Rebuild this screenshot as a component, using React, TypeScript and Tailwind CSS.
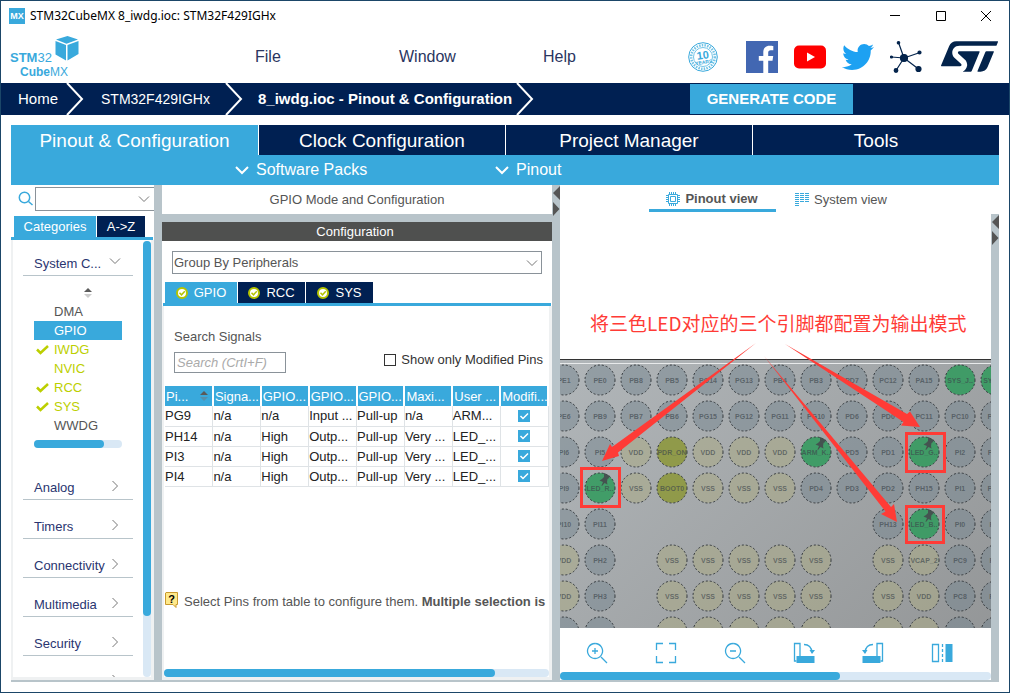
import React from "react";
import { FaTwitter } from "react-icons/fa";
import { SiStmicroelectronics } from "react-icons/si";

const menus = ["File", "Window", "Help"];
const mainTabs = ["Pinout & Configuration", "Clock Configuration", "Project Manager", "Tools"];

const peripherals = [
  { name: "DMA" },
  { name: "GPIO", selected: true },
  { name: "IWDG", green: true, checked: true },
  { name: "NVIC", green: true },
  { name: "RCC", green: true, checked: true },
  { name: "SYS", green: true, checked: true },
  { name: "WWDG" },
];

const categories = ["Analog", "Timers", "Connectivity", "Multimedia", "Security"];

const columns = ["Pi...", "Signa...", "GPIO...", "GPIO...", "GPIO...", "Maxi...", "User ...", "Modifi..."];

const signals = [
  ["PG9", "n/a", "n/a", "Input ...", "Pull-up", "n/a", "ARM..."],
  ["PH14", "n/a", "High", "Outp...", "Pull-up", "Very ...", "LED_..."],
  ["PI3", "n/a", "High", "Outp...", "Pull-up", "Very ...", "LED_..."],
  ["PI4", "n/a", "High", "Outp...", "Pull-up", "Very ...", "LED_..."],
];

// "-" is an empty ball, "*" marks a pin that is locked with a pushpin
const balls = [
  "PE1 PE0 PB8 PB5 PG14 PG13 PB4 PB3 PD7 PC12 PA15 SYS_J.. SYS_J..",
  "PE6 PB9 PB7 PB6 PG15 PG12 PG11 PG10 PD6 PD0 PC11 PC10 PA12",
  "PI6 PI5 VDD PDR_ON VDD VDD VDD ARM_K..* PD5 PD1 LED_G..* PI2 PA11",
  "PI9 LED_R..* VSS BOOT0 VSS VSS VSS PD4 PD3 PD2 PH15 PI1 PA10",
  "PI10 PI11 - - - - - - - PH13 LED_B..* PI0 PA9",
  "VDD PH2 - VSS VSS VSS VSS VSS - VSS VCAP_2 PC9 PA8",
  "VDD PH3 - VSS VSS VSS VSS VSS - VSS VDD PC8 PC7",
  "PF1 PH4 - VSS VSS VSS VSS VSS - VSS VDD PG8 PC6",
];

const ballFill = (name: string) => {
  if (/^(LED|ARM|SYS)/.test(name)) return { fill: "#2f9a5c", fillOpacity: 0.85 };
  if (/^(PDR|BOOT)/.test(name)) return { fill: "#8c9638", fillOpacity: 0.85 };
  if (/^V/.test(name)) return { fill: "#aaaa88", fillOpacity: 0.6 };
  return { fill: "#76858f", fillOpacity: 0.5 };
};

const Chevron = ({ dir, className }: { dir: "down" | "right"; className?: string }) => (
  <svg width="12" height="12" viewBox="0 0 12 12" fill="none" stroke="currentColor" className={className}>
    <path d={dir === "down" ? "M1 3.5 6 8.5 11 3.5" : "M3.5 1 8.5 6 3.5 11"} />
  </svg>
);

const SortArrows = ({ lower }: { lower: string }) => (
  <svg width="8" height="12" viewBox="0 0 8 12" className="shrink-0">
    <path d="M0 5 4 1 8 5z" fill="#5a5a5a" />
    <path d="M0 7 4 11 8 7z" fill={lower} />
  </svg>
);

const Separator = () => (
  <svg width="18" height="32" viewBox="0 0 18 32" fill="none" stroke="#fff" strokeWidth="2" className="shrink-0">
    <path d="M1 0 16 16 1 32" />
  </svg>
);

const Splitter = () => (
  <div className="w-2 shrink-0 bg-[#b8c4ca]">
    <svg width="8" height="32" viewBox="0 0 8 32" fill="#555">
      <path d="M8 1v14L1 8zM1 17v14l6.500-7z" />
    </svg>
  </div>
);

const OkBadge = () => (
  <svg width="12" height="12" viewBox="0 0 12 12" fill="none">
    <circle cx="6" cy="6" r="5" fill="#fff" stroke="#b5c400" strokeWidth="2" />
    <path d="M3.500 5.800 5.500 7.800 8.800 4.200" stroke="#b5c400" strokeWidth="1.500" />
  </svg>
);

const Logo = () => (
  <svg width="70" height="44" viewBox="0 0 70 44" className="font-['Liberation_Sans',sans-serif]" fill="#39a9dc">
    <text x="0" y="27" fontSize="13">
      <tspan fontWeight="bold">STM</tspan>32
    </text>
    <text x="10" y="41" fontSize="12">
      <tspan fontWeight="bold">Cube</tspan>MX
    </text>
    <path d="M46 4.500 57.500 1 68 4.500 56.500 8.800zM45.500 6l10.500 4V25.500L45.500 19.500zM68.500 6v13L57.500 25.500V10z" />
  </svg>
);

const Badge = () => (
  <svg width="30" height="30" viewBox="0 0 30 30" fill="none" stroke="#39a9dc">
    <circle cx="15" cy="15" r="14.300" strokeWidth="1" />
    <circle cx="15" cy="15" r="11.800" strokeWidth="2.500" strokeDasharray="1.500 1.200" opacity=".7" />
    <circle cx="15" cy="15" r="9.500" strokeWidth="1" opacity=".7" />
    <g fill="#39a9dc" stroke="none" textAnchor="middle" transform="rotate(-8 15 15)" className="font-['Liberation_Sans',sans-serif] font-bold">
      <text x="15" y="17" fontSize="11">10</text>
      <text x="15" y="22" fontSize="5">YEARS</text>
    </g>
  </svg>
);

const TitleBar = () => (
  <div className="flex h-[29px] shrink-0 items-center pl-2">
    <span className="flex h-4 w-4 items-center justify-center bg-[#39a9dc] text-[9px] font-bold text-white">MX</span>
    <h1 className="ml-[5px] flex-1 font-['Noto_Sans',sans-serif] text-xs text-black">STM32CubeMX 8_iwdg.ioc: STM32F429IGHx</h1>
    <button aria-label="Minimize" className="flex w-[46px] justify-center">
      <svg width="10" height="10" stroke="#000"><path d="M0 4.500h10" /></svg>
    </button>
    <button aria-label="Maximize" className="flex w-[45px] justify-center">
      <svg width="10" height="10" fill="none" stroke="#000"><path d="M.5.5h9v9h-9z" /></svg>
    </button>
    <button aria-label="Close" className="flex w-[46px] justify-center">
      <svg width="10" height="10" stroke="#000"><path d="M0 0 10 10M10 0 0 10" /></svg>
    </button>
  </div>
);

const Header = () => (
  <header className="flex h-[53px] shrink-0 items-center pr-[11px] pl-[9px]">
    <div className="w-[245px]"><Logo /></div>
    <nav className="flex flex-1 text-base text-[#2a3560]">
      {menus.map((m) => (
        <button key={m} className="w-36 text-left">{m}</button>
      ))}
    </nav>
    <div className="flex shrink-0 items-center">
      <a href="#years" aria-label="10 years" className="mr-7"><Badge /></a>
      <a href="#facebook" aria-label="Facebook" className="mr-4">
        <svg width="32" height="32" viewBox="0 0 32 32">
          <path d="M0 0h32v32H0z" fill="#4267b2" />
          <path d="M17.300 32V19.700h-4.500V15h4.500v-3.700c0-4.200 2.500-6.500 6.300-6.500 1.500 0 3 .1 3.700.2v4.300h-2.500c-2 0-2.600 1-2.600 2.500V15h5l-.7 4.700h-4.300V32z" fill="#fff" />
        </svg>
      </a>
      <a href="#youtube" aria-label="YouTube" className="mr-4">
        <svg width="32" height="32" viewBox="0 0 32 32">
          <rect y="4.500" width="32" height="23" rx="5" fill="#f00" />
          <path d="M13 11.500v9L21 16z" fill="#fff" />
        </svg>
      </a>
      <a href="#twitter" aria-label="Twitter" className="mr-4 text-[#1da1f2]"><FaTwitter size={32} /></a>
      <a href="#community" aria-label="Community" className="mr-[19px]">
        <svg width="32" height="32" viewBox="0 0 32 32" fill="#03234b" stroke="#03234b" strokeWidth="1.200">
          <path d="M14 17 8.500 1.500M14 17 30 11.500M14 17 1.500 16M14 17 6 29.500M14 17l14.500 11" />
          <circle cx="14" cy="17" r="3.500" />
          <circle cx="8.500" cy="1.800" r="1.200" />
          <circle cx="29.500" cy="11.500" r="1.500" />
          <circle cx="1.500" cy="16" r="1" />
          <circle cx="6" cy="29.500" r="1.800" />
          <circle cx="28.500" cy="28" r="2.500" />
        </svg>
      </a>
      <a href="#st" aria-label="STMicroelectronics" className="text-[#03234b]"><SiStmicroelectronics size={57} /></a>
    </div>
  </header>
);

const Breadcrumb = () => (
  <nav className="flex h-8 shrink-0 items-center bg-[#002052] text-sm text-white">
    <a href="#home" className="w-[65px] pl-[17px] text-[15px]">Home</a>
    <Separator />
    <a href="#mcu" className="w-[141px] pl-[17px]">STM32F429IGHx</a>
    <Separator />
    <a href="#ioc" className="w-[273px] pl-[15px] text-[15px] font-bold whitespace-nowrap">8_iwdg.ioc - Pinout &amp; Configuration</a>
    <Separator />
    <button className="mr-[156px] ml-auto h-[30px] w-[163px] bg-[#39a9dc] text-[15px] font-bold">GENERATE CODE</button>
  </nav>
);

const MainTabs = () => (
  <div className="shrink-0 bg-[#39a9dc] text-white">
    <div className="grid grid-cols-4">
      {mainTabs.map((t, i) => (
        <button key={t} className={i === 0 ? "h-[30px] pt-0.5 text-[19px]" : "h-[30px] border-l border-white bg-[#002052] pt-0.5 text-[19px]"}>
          {t}
        </button>
      ))}
    </div>
    <div className="flex h-[30px] justify-center pr-5 text-base">
      {["Software Packs", "Pinout"].map((t) => (
        <button key={t} className="flex w-[260px] items-center gap-[7px]">
          <svg width="14" height="10" viewBox="0 0 14 10" fill="none" stroke="#fff" strokeWidth="2">
            <path d="M1 2 7 8 13 2" />
          </svg>
          {t}
        </button>
      ))}
    </div>
  </div>
);

const Sidebar = () => (
  <aside className="flex w-[143px] shrink-0 flex-col">
    <div className="flex h-[31px] items-start pt-0.5 pl-1.5">
      <svg width="18" height="24" viewBox="0 0 18 24" fill="none" stroke="#39a9dc" strokeWidth="1.500">
        <circle cx="7.500" cy="10.500" r="5.200" />
        <path d="M11.500 14.500 15.500 18" />
      </svg>
      <div className="flex h-6 min-w-0 flex-1 items-center border border-r-0 border-[#8a9299] pr-1">
        <input aria-label="Search" className="min-w-0 flex-1 outline-none" />
        <Chevron dir="down" className="text-[#777]" />
      </div>
    </div>
    <div className="mr-px flex h-6 border-b-[3px] border-[#39a9dc] pl-[3px] text-white">
      <button className="w-[82px] bg-[#39a9dc]">Categories</button>
      <button className="ml-px w-12 bg-[#002052]">A-&gt;Z</button>
    </div>
    <div className="flex min-h-0 flex-1 border-r-[3px] border-b-[3px] border-l-2 border-[#eff1f2] pt-px">
      <div className="min-w-0 flex-1 overflow-hidden px-2.5 pt-2.5">
        <button className="flex h-[25px] w-full items-center justify-between border-b border-[#b8c4ca] pt-0.5 pr-3 pl-[11px] text-[#2a3570]">
          System C...
          <Chevron dir="down" className="mb-1.5 text-[#777]" />
        </button>
        <div className="pr-[11px] pb-[26px] pl-[11px]">
          <div className="flex h-[26px] justify-center pt-[11px] pl-5"><SortArrows lower="#ccc" /></div>
          {peripherals.map((p) => (
            <button
              key={p.name}
              className={`flex h-[19px] w-full items-center ${p.selected ? "bg-[#39a9dc] text-white" : p.green ? "text-[#bccf00]" : "text-[#555]"}`}
            >
              <span className="w-5 pl-0.5">
                {p.checked && (
                  <svg width="13" height="10" viewBox="0 0 13 10" fill="none" stroke="#bccf00" strokeWidth="2.500">
                    <path d="M1 4.500 4.500 8 12 1" />
                  </svg>
                )}
              </span>
              {p.name}
            </button>
          ))}
          <div className="mt-[5px] h-2 rounded-full bg-[#d9e8f5]">
            <div className="h-2 w-4/5 rounded-full bg-[#39a9dc]" />
          </div>
        </div>
        {categories.map((c) => (
          <button key={c} className="mb-[13px] flex h-[26px] w-full items-center justify-between border-b border-[#b8c4ca] pt-0.5 pr-3 pl-[11px] text-[#2a3570]">
            {c}
            <Chevron dir="right" className="mb-1 text-[#777]" />
          </button>
        ))}
        <button aria-label="More categories" className="flex h-[26px] w-full items-center justify-end pr-3">
          <Chevron dir="right" className="mb-1 text-[#777]" />
        </button>
      </div>
      <div className="w-2 shrink-0 rounded-full bg-[#d9e8f5]">
        <div className="h-[86%] rounded-full bg-[#39a9dc]" />
      </div>
    </div>
  </aside>
);

const SignalTable = () => (
  <table className="mt-[13px] w-full table-fixed border-collapse text-left leading-[19px] text-[#222]">
    <thead>
      <tr className="h-5 text-white">
        {columns.map((c, i) => (
          <th key={i} className="border-r-2 border-white bg-[#39a9dc] p-0 pl-px font-normal whitespace-nowrap">
            <span className="flex items-center justify-between pr-1">
              {c}
              {i === 0 && <SortArrows lower="#5590ad" />}
            </span>
          </th>
        ))}
      </tr>
    </thead>
    <tbody>
      {signals.map((row) => (
        <tr key={row[0]} className="h-5">
          {row.map((cell, i) => (
            <td key={i} className="border-r border-b border-[#dfe3e6] p-0 whitespace-nowrap">{cell}</td>
          ))}
          <td className="border-r border-b border-[#dfe3e6] p-0">
            <label className="relative mx-auto block h-3 w-3">
              <input type="checkbox" defaultChecked aria-label={`${row[0]} modified`} className="block h-3 w-3 appearance-none bg-[#39a9dc]" />
              <svg width="12" height="12" fill="none" stroke="#fff" strokeWidth="1.500" className="pointer-events-none absolute inset-0">
                <path d="M2.500 6 5 8.500 10 3.500" />
              </svg>
            </label>
          </td>
        </tr>
      ))}
    </tbody>
  </table>
);

const ConfigPanel = () => (
  <section className="flex w-[390px] shrink-0 flex-col">
    <h2 className="h-[29px] text-center leading-[29px] text-[#555]">GPIO Mode and Configuration</h2>
    <div className="h-2 bg-[#b8c4ca]" />
    <h3 className="h-[19px] bg-[#4f504f] pr-1 text-center leading-[19px] text-white">Configuration</h3>
    <div className="relative mx-2.5 mt-2.5">
      <select aria-label="Group by" className="h-[23px] w-full appearance-none border border-[#8a9299] pl-px text-[#555]">
        <option>Group By Peripherals</option>
      </select>
      <Chevron dir="down" className="pointer-events-none absolute top-1.5 right-1 text-[#777]" />
    </div>
    <div className="mx-px mt-2 flex gap-px border-b-[3px] border-[#39a9dc] pl-0.5 text-white">
      {["GPIO", "RCC", "SYS"].map((t, i) => (
        <button key={t} className={`flex h-[21px] items-center justify-center gap-1.5 ${i === 0 ? "w-[72px] bg-[#39a9dc]" : "w-[67px] bg-[#002052]"}`}>
          <OkBadge />
          {t}
        </button>
      ))}
    </div>
    <div className="flex min-h-0 flex-1 flex-col overflow-hidden border-r-[3px] border-b-[3px] border-l-2 border-[#eff1f2] text-[#555]">
      <div className="pt-[21px] pl-px">
        <label htmlFor="signals" className="block pl-[9px] leading-5">Search Signals</label>
        <div className="mt-[5px] flex items-start justify-between pr-1.5 pl-[9px]">
          <input id="signals" placeholder="Search (CrtI+F)" className="h-[21px] w-28 border border-[#8a9299] pl-0.5 italic placeholder:text-[#aaa]" />
          <label className="flex items-center gap-[5px] leading-4 text-[#333]">
            <input type="checkbox" className="h-3 w-3 appearance-none border border-[#333]" />
            Show only Modified Pins
          </label>
        </div>
        <SignalTable />
      </div>
      <div className="mt-auto flex items-center gap-[5px] pb-[57px] pl-px whitespace-nowrap">
        <svg width="14" height="16" viewBox="0 0 14 16" className="mb-1 shrink-0">
          <path d="M1 .5h11.500v12h-1.500v3l-3-3H.5V1z" fill="#ffe98a" stroke="#c99a2e" />
          <text x="6.500" y="10.500" fontSize="11" fontWeight="bold" textAnchor="middle">?</text>
        </svg>
        <p>
          Select Pins from table to configure them. <b>Multiple selection is</b>
        </p>
      </div>
      <div className="h-2 shrink-0 rounded-full bg-[#d9e8f5]">
        <div className="h-2 w-[86%] rounded-full bg-[#39a9dc]" />
      </div>
    </div>
  </section>
);

const Ball = ({ name, x, y, labelled }: { name: string; x: number; y: number; labelled: boolean }) => {
  const pinned = name.endsWith("*");
  const label = name.replace("*", "");
  return (
    <g>
      <circle cx={x} cy={y} r="15" {...ballFill(label)} stroke="#33383c" strokeDasharray="2 2" />
      {labelled && (
        <text x={x} y={y + 3} fontSize="7" fontWeight="bold" textAnchor="middle" fill="#3c454b" fillOpacity=".65">
          {label}
        </text>
      )}
      {pinned && (
        <path
          d={`M${x + 4} ${y - 15}l6 3-1.500 2.500-1 .5-.5 3 .5 2.500-3-1.500-2.500 3-.5-.5 1.500-3.500-3.500-1.500 2.500-1.500 2-2z`}
          fill="#454b4e"
          fillOpacity=".9"
        />
      )}
    </g>
  );
};

const PinMap = () => (
  <svg className="min-h-0 w-full flex-1 overflow-hidden font-['Liberation_Sans',sans-serif]">
    <defs>
      <linearGradient id="chip" x1="0" y1="0" x2="1" y2="1">
        <stop offset="0" stopColor="#b1b6b9" />
        <stop offset="1" stopColor="#8e9091" />
      </linearGradient>
    </defs>
    <rect y="145" width="100%" height="100%" fill="url(#chip)" />
    <rect y="145" width="100%" height="1" fill="#333" />
    <rect y="149" width="100%" height="1" fill="#e8eaeb" />
    {balls.map((row, r) =>
      row.split(" ").map(
        (name, c) =>
          name !== "-" && (
            <Ball key={`${r}-${c}`} name={name} x={4 + c * 36} y={166 + r * 36} labelled={r < balls.length - 1} />
          )
      )
    )}
    <g fill="#ff3b36">
      <path d="M196 129 58 238.500 59 242 42 247 50 230 52 233z" />
      <path d="M225 130 347 200 350 197.500 360 213 341 211.500 343.500 208z" />
      <path d="M204 142 331 293 334 290 337 308 321 300 325.500 297.500z" />
    </g>
    <g fill="none" stroke="#ff3b36" strokeWidth="3">
      <rect x="21.500" y="254.500" width="38" height="38" />
      <rect x="346.500" y="219.500" width="38" height="38" />
      <rect x="346.500" y="292.500" width="37" height="36" />
    </g>
  </svg>
);

const tools = [
  { label: "Zoom in", d: "M15 15l6 6M6 9h6M9 6v6M9 1.500a7.500 7.500 0 1 0 .1 0" },
  { label: "Best fit", d: "M1.500 8V1.500h6.500M14 1.500h6.500v6.500M20.500 14v6.500h-6.500M8 20.500H1.500v-6.500" },
  { label: "Zoom out", d: "M15 15l6 6M6 9h6M9 1.500a7.500 7.500 0 1 0 .1 0" },
  { label: "Rotate clockwise", d: "M7 14V1.500H1.500V19h2M11 2.500c5 0 7.500 3 8 8", solid: "M3.500 14h18v7h-18zM16.500 8h5.500l-3 4z" },
  { label: "Rotate counterclockwise", d: "M15 14V1.500h5.500V19h-2M11 2.500c-5 0-7.500 3-8 8", solid: "M.5 14h18v7H.5zM0 8h5.500L3 12z" },
  { label: "Flip", d: "M1.500 2.500h6v17h-6zM11.500 2v3M11.500 7v3M11.500 12v3M11.500 17v3", solid: "M14.500 2h7v18h-7z" },
];

const PinoutPanel = () => (
  <section className="flex min-w-0 flex-1 flex-col">
    <div className="flex h-[29px] justify-center pr-1 text-[#555]">
      <button className="flex h-[27px] w-[127px] items-center justify-center gap-[5px] border-b-[3px] border-[#39a9dc] pt-1 font-bold">
        <svg width="14" height="14" viewBox="0 0 14 14" fill="none" stroke="#39a9dc">
          <path d="M2.500 2.500h9v9h-9zM4.500 4.500h5v5h-5z" />
          <path d="M3.500 0v2M5.500 0v2M7.500 0v2M9.500 0v2M3.500 12v2M5.500 12v2M7.500 12v2M9.500 12v2M0 3.500h2M0 5.500h2M0 7.500h2M0 9.500h2M12 3.500h2M12 5.500h2M12 7.500h2M12 9.500h2" />
        </svg>
        Pinout view
      </button>
      <button className="flex h-[27px] w-[131px] items-center justify-center gap-[5px] pt-0.5">
        <svg width="14" height="14" viewBox="0 0 14 14" fill="none" stroke="#39a9dc">
          <path d="M2 0v14" strokeWidth="4" strokeDasharray="1 1" />
          <path d="M7 0v10M12 0v10" strokeWidth="4" strokeDasharray="1 1" />
        </svg>
        System view
      </button>
    </div>
    <div className="flex min-h-0 flex-1">
      <div className="relative flex min-w-0 flex-1 flex-col">
        <PinMap />
        <p className="absolute top-[95px] left-[30px] font-['Noto_Sans_CJK_SC',sans-serif] text-[19px] leading-7 whitespace-nowrap text-[#ff3b36]">
          将三色LED对应的三个引脚都配置为输出模式
        </p>
        <div className="flex h-11 shrink-0 items-center pt-1.5 pl-0.5">
          {tools.map((t) => (
            <button key={t.label} aria-label={t.label} className="flex w-[69px] justify-center">
              <svg width="22" height="22" viewBox="0 0 22 22" fill="none" stroke="#39a9dc" strokeWidth="1.300">
                <path d={t.d} />
                {t.solid && <path d={t.solid} fill="#39a9dc" stroke="none" />}
              </svg>
            </button>
          ))}
        </div>
        <div className="h-2 shrink-0 rounded-full bg-[#d9e8f5]">
          <div className="h-2 w-[65%] rounded-full bg-[#39a9dc]" />
        </div>
      </div>
      <Splitter />
    </div>
  </section>
);

export default function App() {
  return (
    <div className="flex h-screen flex-col border border-[#1b4668] bg-white font-['Liberation_Sans',Arial,sans-serif] text-[13px] leading-5">
      <TitleBar />
      <Header />
      <Breadcrumb />
      <main className="mx-2.5 mt-2.5 mb-2.5 flex min-h-0 flex-1 flex-col">
        <MainTabs />
        <div className="flex min-h-0 flex-1 border-b-2 border-[#b8c4ca]">
          <Sidebar />
          <div className="w-2 shrink-0 bg-[#b8c4ca]" />
          <ConfigPanel />
          <Splitter />
          <PinoutPanel />
        </div>
      </main>
    </div>
  );
}
